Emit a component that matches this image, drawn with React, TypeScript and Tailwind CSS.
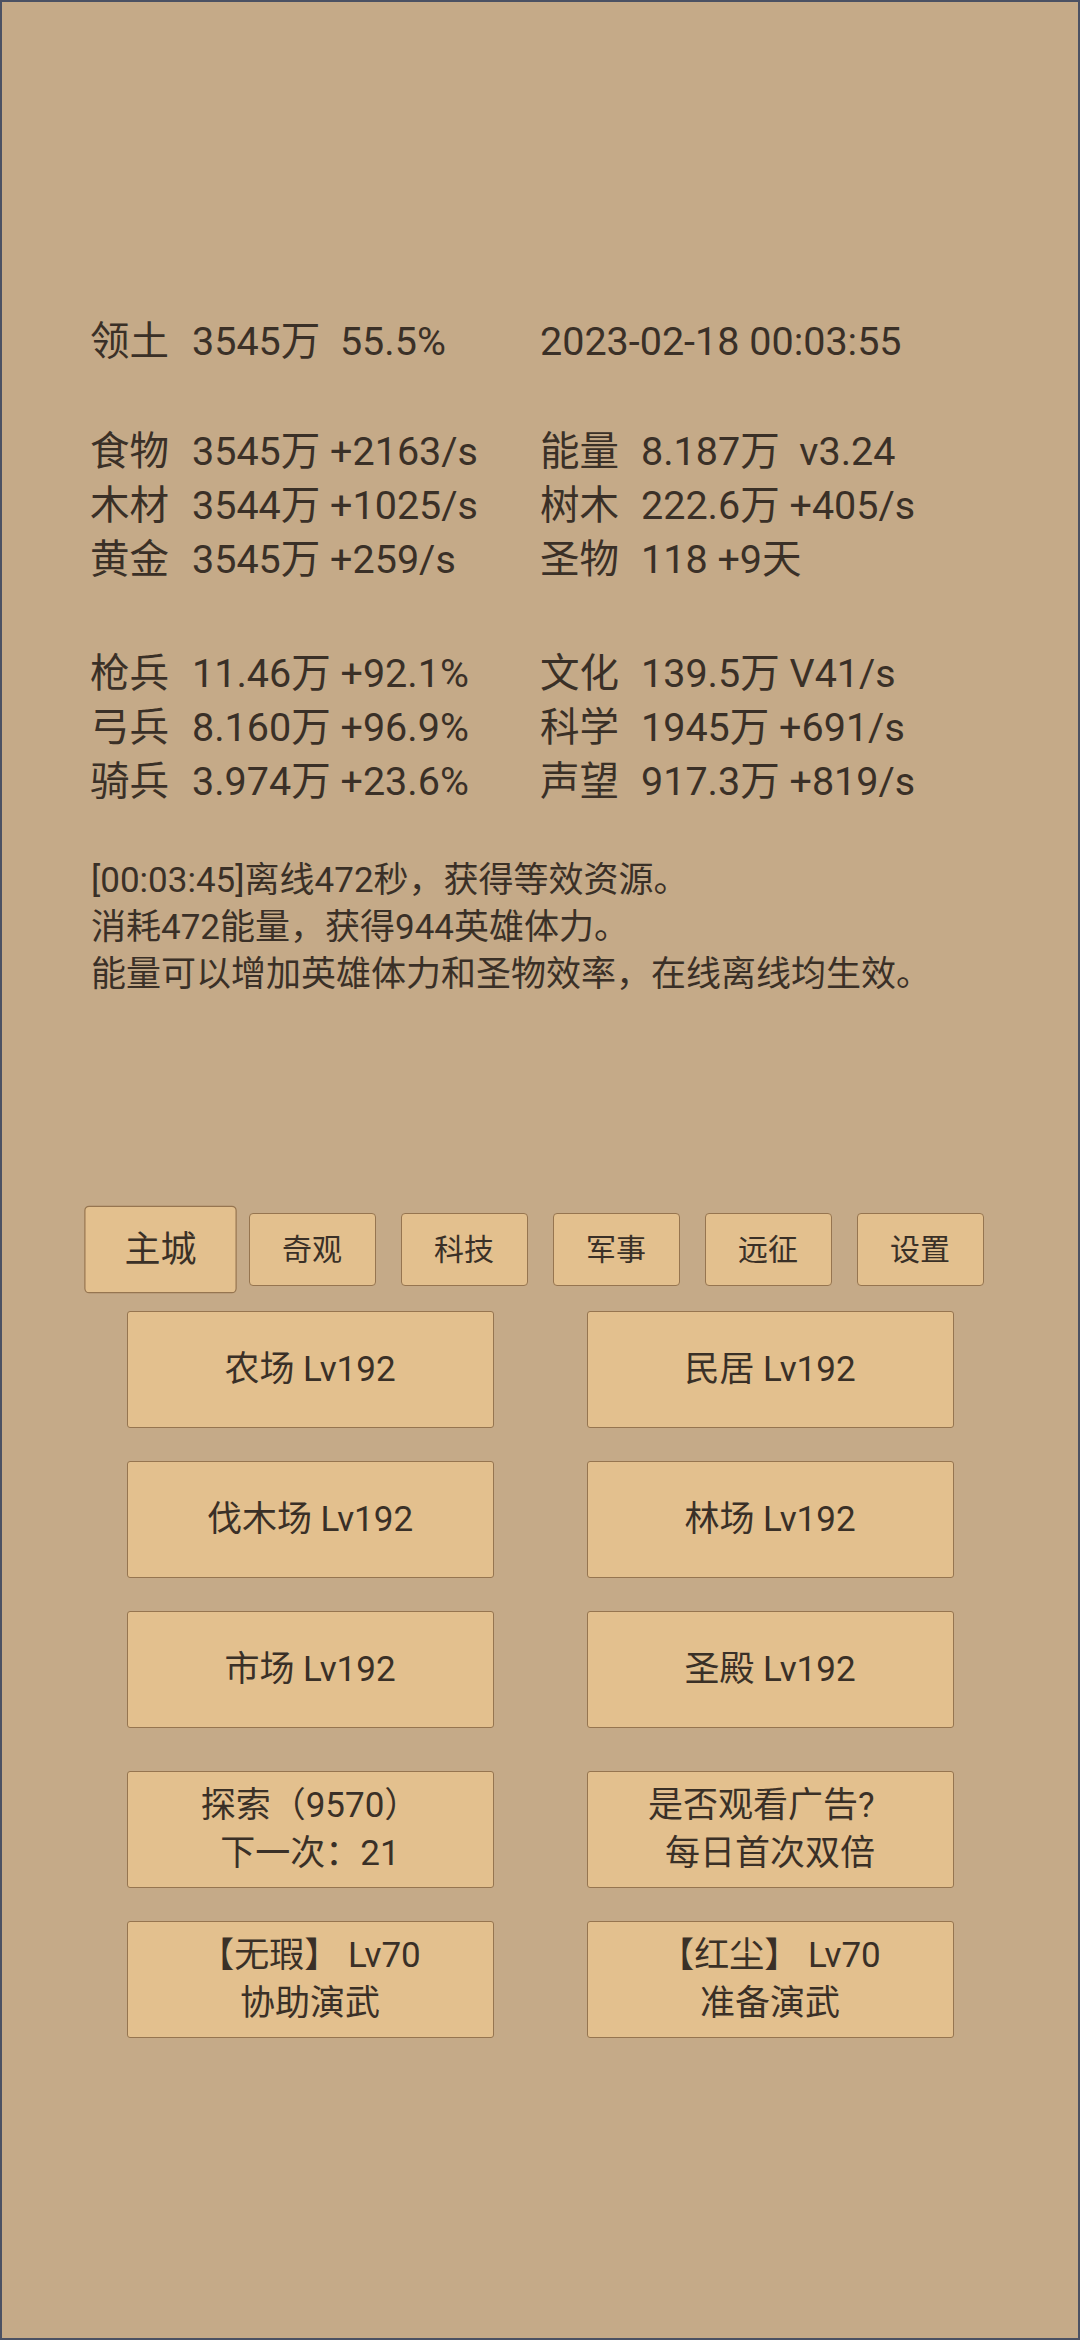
import React from "react";

const font = { fontFamily: '"Roboto", "Noto Sans CJK SC", sans-serif' };

type Row = [string, string, string, string];

const groups: Row[][] = [
  [["食物", "3545万 +2163/s", "能量", "8.187万  v3.24"],
   ["木材", "3544万 +1025/s", "树木", "222.6万 +405/s"],
   ["黄金", "3545万 +259/s", "圣物", "118 +9天"]],
  [["枪兵", "11.46万 +92.1%", "文化", "139.5万 V41/s"],
   ["弓兵", "8.160万 +96.9%", "科学", "1945万 +691/s"],
   ["骑兵", "3.974万 +23.6%", "声望", "917.3万 +819/s"]],
];

const tabs = ["主城", "奇观", "科技", "军事", "远征", "设置"];
const buildings = ["农场", "民居", "伐木场", "林场", "市场", "圣殿"];

const StatRow = ({ row }: { row: Row }) => (
  <div className="flex h-[54px] items-center">
    <div className="flex w-[450px]">
      <span className="w-[102px]">{row[0]}</span>
      <span className="whitespace-pre">{row[1]}</span>
    </div>
    <div className="flex">
      <span className="w-[101px]">{row[2]}</span>
      <span className="whitespace-pre">{row[3]}</span>
    </div>
  </div>
);

const Btn = ({ children }: { children: React.ReactNode }) => (
  <div className="w-[367px] h-[117px] flex flex-col items-center justify-center bg-[#e3c08e] border-[1.5px] border-[#967550] rounded-[3px] text-[35px] leading-[48px] text-[#3a3027] whitespace-pre">
    {children}
  </div>
);

export default function App() {
  return (
    <div
      className="w-[1080px] h-[2340px] bg-[#c5aa88] border-2 border-[#4b5163] text-[#3a3027] flex flex-col"
      style={font}
    >
      {/* Stats */}
      <div className="pl-[88px] pt-[313px] text-[39.5px]">
        <div className="flex h-[54px] items-center">
          <div className="flex w-[450px]">
            <span className="w-[102px]">领土</span>
            <span className="whitespace-pre">3545万  55.5%</span>
          </div>
          <span>2023-02-18 00:03:55</span>
        </div>
        <div className="mt-[56px]">
          {groups[0].map((r) => <StatRow key={r[0]} row={r} />)}
        </div>
        <div className="mt-[60px]">
          {groups[1].map((r) => <StatRow key={r[0]} row={r} />)}
        </div>
      </div>

      {/* Log */}
      <div className="pl-[89px] mt-[48px] text-[35px] leading-[47px]">
        <div>[00:03:45]离线472秒，获得等效资源。</div>
        <div>消耗472能量，获得944英雄体力。</div>
        <div>能量可以增加英雄体力和圣物效率，在线离线均生效。</div>
      </div>

      {/* Tabs */}
      <div className="mt-[215px] flex justify-center gap-[25px]">
        {tabs.map((t, i) => (
          <div
            key={t}
            className={
              "w-[127px] h-[73px] flex items-center justify-center bg-[#e3c08e] border-[1.5px] border-[#967550] rounded-[4px] text-[30px] " +
              (i === 0 ? "scale-120" : "")
            }
          >
            {t}
          </div>
        ))}
      </div>

      {/* Buildings */}
      <div className="mt-[25px] flex justify-center">
        <div className="grid grid-cols-2 gap-x-[93px] gap-y-[33px]">
          {buildings.map((b) => (
            <Btn key={b}>{b} Lv192</Btn>
          ))}
        </div>
      </div>

      <div className="mt-[43px] flex justify-center">
        <div className="grid grid-cols-2 gap-x-[93px] gap-y-[33px]">
          <Btn>
            <span>探索（9570）</span>
            <span>下一次：21</span>
          </Btn>
          <Btn>
            <span>{"是否观看广告?\u00a0\u00a0"}</span>
            <span>每日首次双倍</span>
          </Btn>
          <Btn>
            <span>【无瑕】 Lv70</span>
            <span>协助演武</span>
          </Btn>
          <Btn>
            <span>【红尘】 Lv70</span>
            <span>准备演武</span>
          </Btn>
        </div>
      </div>
    </div>
  );
}
